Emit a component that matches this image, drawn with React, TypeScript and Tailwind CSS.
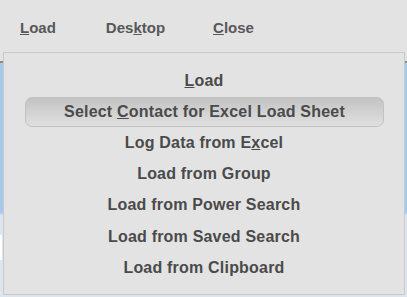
import React from 'react';

const items: { label: React.ReactNode; selected?: boolean }[] = [
  { label: <><u>L</u>oad</> },
  { label: <>Select <u>C</u>ontact for Excel Load Sheet</>, selected: true },
  { label: <>Log Data from E<u>x</u>cel</> },
  { label: 'Load from Group' },
  { label: 'Load from Power Search' },
  { label: 'Load from Saved Search' },
  { label: 'Load from Clipboard' },
];

const App: React.FC = () => {
  return (
    <div
      className="relative w-[407px] h-[297px] overflow-hidden bg-[#dde6ef]"
      style={{ fontFamily: '"Liberation Sans", Arial, sans-serif' }}
    >
      {/* top menu bar */}
      <div className="h-[52px] bg-[#e3e3e3] flex items-center text-[15px] font-bold text-[#585858] pt-[4px]">
        <span className="ml-[20px]"><u>L</u>oad</span>
        <span className="ml-[50px]">Des<u>k</u>top</span>
        <span className="ml-[48px]"><u>C</u>lose</span>
      </div>

      {/* background content behind the dropdown */}
      <div className="h-[9px] bg-[#e3e3e3]" />
      <div className="h-[2px] bg-[#8a8a8a]" />
      <div className="h-[150px] bg-[#a4c8ee]" />
      <div className="h-[2px] bg-[#c2d8ee]" />
      <div className="h-[20px]" />
      <div className="h-[25px] w-[2px] bg-white" />

      {/* dropdown */}
      <div className="absolute left-[3px] top-[52px] w-[402px] h-[243px] bg-[#e3e3e3] border border-[#c9c9c9] pt-[12px] text-[16px] font-bold text-[#4a4a4a] tracking-[0.2px]">
        {items.map((item, i) => (
          <div key={i} className="h-[31.2px] flex items-center justify-center">
            {item.selected ? (
              <div className="w-[359px] h-[30px] ml-[1px] rounded-[7px] border border-[#c2c2c2] bg-gradient-to-b from-[#c3c3c3] to-[#e0e0e0] flex items-center justify-center">
                <span>{item.label}</span>
              </div>
            ) : (
              <span>{item.label}</span>
            )}
          </div>
        ))}
      </div>
    </div>
  );
};

export default App;
